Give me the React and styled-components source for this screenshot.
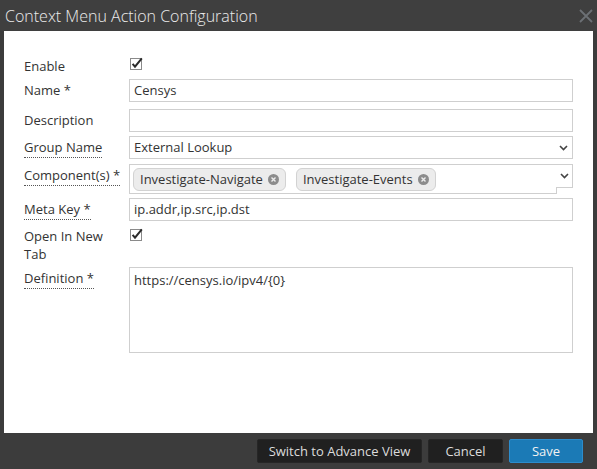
import React from "react";
import styled, { createGlobalStyle } from "styled-components";

const Global = createGlobalStyle`
  html, body { margin: 0; padding: 0; background: #3c3c3c; }
  body { font-family: "Open Sans", "Liberation Sans", sans-serif; }
  * { box-sizing: border-box; }
`;

const Dialog = styled.div`
  width: 597px;
  height: 469px;
  background: #3c3c3c;
  display: flex;
  flex-direction: column;
`;

const TitleBar = styled.div`
  height: 31px;
  display: flex;
  align-items: center;
  justify-content: space-between;
  padding: 0 4px 0 5px;
  color: #ececec;
  font-size: 16px;
  font-weight: 300;
  background: #3f3f3f;
`;

const Body = styled.div`
  flex: 1;
  margin: 0 4px;
  background: #fff;
  padding: 26px 20px 0 20px;
`;

const Row = styled.div`
  display: grid;
  grid-template-columns: 105px 1fr;
  align-items: start;
  margin-top: ${(p) => p.$mt || 0}px;
`;

const Label = styled.div`
  color: #333;
  font-size: 13px;
  line-height: ${(p) => p.$lh || 23}px;
  padding-right: 5px;
`;

const Dotted = styled.span`
  border-bottom: 1px dotted #555;
  padding-bottom: 1px;
`;

const Input = styled.div`
  height: ${(p) => p.$h || 23}px;
  border: 1px solid #cfcfcf;
  font-size: 13px;
  color: #333;
  padding: 0 4px;
  line-height: 21px;
  display: flex;
  align-items: ${(p) => (p.$top ? "flex-start" : "center")};
  justify-content: space-between;
  padding-top: ${(p) => (p.$top ? 2 : 0)}px;
`;

const CheckWrap = styled.div`
  padding: ${(p) => p.$pt || 0}px 0 0 1px;
  display: flex;
`;

const MultiWrap = styled.div`
  display: flex;
  align-items: flex-start;
`;

const TagsBox = styled.div`
  flex: 1;
  height: 30px;
  border: 1px solid #cfcfcf;
  display: flex;
  align-items: center;
  gap: 10px;
  padding: 0 3px;
`;

const ArrowBox = styled.div`
  width: 17px;
  height: 24px;
  margin-left: -1px;
  border: 1px solid #cfcfcf;
  border-left: none;
  background: #fff;
  position: relative;
  z-index: 1;
  display: flex;
  align-items: center;
  justify-content: center;
`;

const Tag = styled.div`
  height: 23px;
  display: flex;
  align-items: center;
  gap: 5px;
  padding: 0 6px 0 6px;
  background: #ececec;
  border: 1px solid #d2d2d2;
  border-radius: 6px;
  font-size: 13px;
  color: #333;
`;

const Footer = styled.div`
  height: 36px;
  display: flex;
  align-items: center;
  justify-content: flex-end;
  gap: 6px;
  padding-right: 14px;
`;

const Button = styled.div`
  height: 24px;
  width: ${(p) => p.$w}px;
  display: flex;
  align-items: center;
  justify-content: center;
  font-size: 13px;
  color: ${(p) => (p.$primary ? "#f2f2f2" : "#dcdcdc")};
  background: ${(p) => (p.$primary ? "#1b7ab6" : "#202020")};
  border: 1px solid ${(p) => (p.$primary ? "#2c8ccc" : "#262626")};
  border-radius: 2px;
`;

const Check = () => (
  <svg width="14" height="13" viewBox="0 0 14 13">
    <rect x="0.5" y="1.5" width="11" height="11" fill="#fff" stroke="#8a8a8a" />
    <path d="M2.6 6.8 L5 9.6 L11.8 1.4" fill="none" stroke="#2b2b2b" strokeWidth="2" />
  </svg>
);

const Chevron = () => (
  <svg width="9" height="6" viewBox="0 0 9 6">
    <path d="M1 1 L4.5 4.5 L8 1" fill="none" stroke="#444" strokeWidth="1.6" />
  </svg>
);

const TagX = () => (
  <svg width="11" height="11" viewBox="0 0 11 11">
    <circle cx="5.5" cy="5.5" r="5.5" fill="#8c8c8c" />
    <path d="M3.5 3.5 L7.5 7.5 M7.5 3.5 L3.5 7.5" stroke="#ececec" strokeWidth="1.4" />
  </svg>
);

const CloseX = () => (
  <svg width="14" height="14" viewBox="0 0 14 14">
    <path d="M1 1 L13 13 M13 1 L1 13" stroke="#6c7075" strokeWidth="1.8" />
  </svg>
);

export default function App() {
  return (
    <>
      <Global />
      <Dialog>
        <TitleBar>
          <span>Context Menu Action Configuration</span>
          <CloseX />
        </TitleBar>
        <Body>
          <Row>
            <Label $lh={18}>Enable</Label>
            <CheckWrap $pt={0}>
              <Check />
            </CheckWrap>
          </Row>
          <Row $mt={4}>
            <Label>Name *</Label>
            <Input>Censys</Input>
          </Row>
          <Row $mt={7}>
            <Label>Description</Label>
            <Input />
          </Row>
          <Row $mt={4}>
            <Label>
              <Dotted>Group Name</Dotted>
            </Label>
            <Input>
              External Lookup
              <Chevron />
            </Input>
          </Row>
          <Row $mt={5}>
            <Label $lh={22}>
              <Dotted>Component(s) *</Dotted>
            </Label>
            <MultiWrap>
              <TagsBox>
                <Tag>
                  Investigate-Navigate <TagX />
                </Tag>
                <Tag>
                  Investigate-Events <TagX />
                </Tag>
              </TagsBox>
              <ArrowBox>
                <Chevron />
              </ArrowBox>
            </MultiWrap>
          </Row>
          <Row $mt={4}>
            <Label>
              <Dotted>Meta Key *</Dotted>
            </Label>
            <Input>ip.addr,ip.src,ip.dst</Input>
          </Row>
          <Row $mt={6}>
            <Label $lh={18}>Open In New Tab</Label>
            <CheckWrap $pt={1}>
              <Check />
            </CheckWrap>
          </Row>
          <Row $mt={4}>
            <Label>
              <Dotted>Definition *</Dotted>
            </Label>
            <Input $h={86} $top>
              https://censys.io/ipv4/{"{0}"}
            </Input>
          </Row>
        </Body>
        <Footer>
          <Button $w={165}>Switch to Advance View</Button>
          <Button $w={75}>Cancel</Button>
          <Button $w={74} $primary>
            Save
          </Button>
        </Footer>
      </Dialog>
    </>
  );
}
